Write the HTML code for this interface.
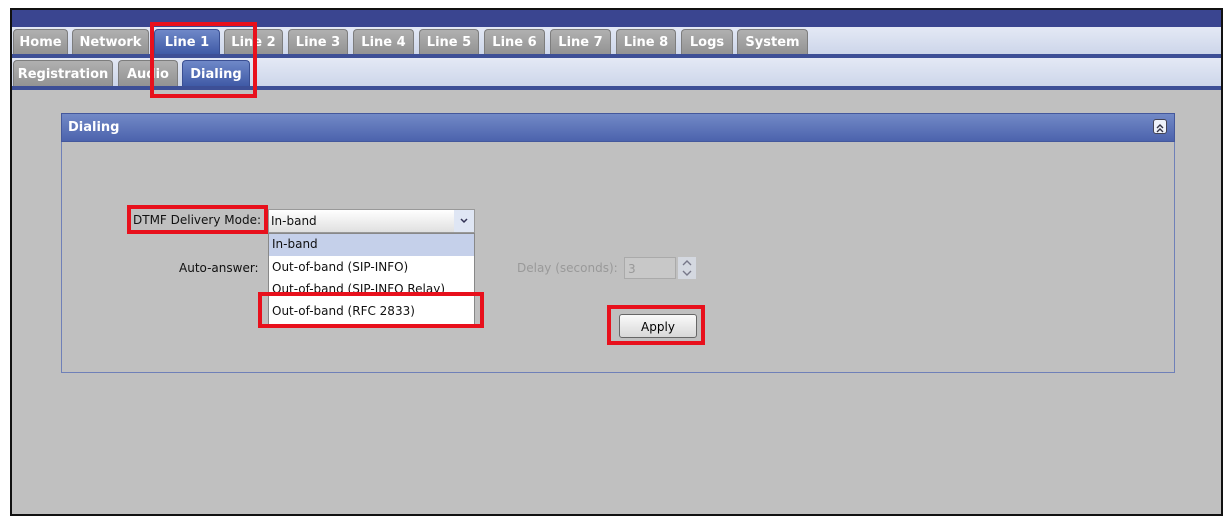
<!DOCTYPE html><html><head><style>
body{margin:0;width:1230px;height:523px;background:#fff;position:relative;font-family:"DejaVu Sans","Liberation Sans",sans-serif;overflow:hidden}
.a{position:absolute;box-sizing:border-box}
.frame{left:10px;top:8px;width:1213px;height:508px;border:2px solid #111;background:#c0c0c0;overflow:hidden}
.tab{position:absolute;top:29px;height:25px;background:linear-gradient(#b0b0b0,#939393);border:1px solid #7d7d7d;border-bottom:none;border-radius:4px 4px 0 0;color:#fff;font-size:13px;font-weight:bold;line-height:25px;text-align:center;box-sizing:border-box}
.on{background:linear-gradient(#6f88c8,#3f5aa6);border-color:#3a4f93}
.red{position:absolute;border:4px solid #e8101c;box-sizing:border-box}
.t{position:absolute;font-size:12px;color:#111;white-space:nowrap}
</style></head><body>
<div class="a frame"></div>
<div class="a" style="left:12px;top:10px;width:1209px;height:17px;background:#3a4590"></div>
<div class="a" style="left:12px;top:27px;width:1209px;height:27px;background:linear-gradient(#e4e9f5,#cdd6ea)"></div>
<div class="a" style="left:12px;top:54px;width:1209px;height:4px;background:#3d4f96"></div>
<div class="a" style="left:12px;top:58px;width:1209px;height:28px;background:linear-gradient(#e4e9f5,#cdd6ea)"></div>
<div class="a" style="left:12px;top:86px;width:1209px;height:4px;background:#3d4f96"></div>
<div class="tab" style="left:13px;width:55px">Home</div>
<div class="tab" style="left:72px;width:77px">Network</div>
<div class="tab on" style="left:154px;width:66px">Line 1</div>
<div class="tab" style="left:224px;width:59px">Line 2</div>
<div class="tab" style="left:288px;width:60px">Line 3</div>
<div class="tab" style="left:353px;width:61px">Line 4</div>
<div class="tab" style="left:419px;width:60px">Line 5</div>
<div class="tab" style="left:484px;width:61px">Line 6</div>
<div class="tab" style="left:550px;width:61px">Line 7</div>
<div class="tab" style="left:616px;width:60px">Line 8</div>
<div class="tab" style="left:681px;width:52px">Logs</div>
<div class="tab" style="left:737px;width:71px">System</div>
<div class="tab" style="left:13px;top:60px;width:100px;height:26px;line-height:28px">Registration</div>
<div class="tab" style="left:118px;top:60px;width:60px;height:26px;line-height:28px">Audio</div>
<div class="tab on" style="left:182px;top:60px;width:68px;height:26px;line-height:28px">Dialing</div>
<div class="a" style="left:61px;top:113px;width:1114px;height:260px;border:1px solid #6f80b8;background:#c0c0c0"></div>
<div class="a" style="left:61px;top:113px;width:1114px;height:29px;background:linear-gradient(#7289c6,#4c63ad);border:1px solid #44589c;color:#fff;font-size:13px;font-weight:bold;line-height:27px;padding-left:6px">Dialing</div>
<div class="a" style="left:1153px;top:119px;width:14px;height:15px;background:#eef2fb;border:1px solid #445;border-radius:3px"><svg width="12" height="13" viewBox="0 0 12 13"><path d="M3 6l3-3 3 3M3 10l3-3 3 3" fill="none" stroke="#334" stroke-width="1.4"/></svg></div>
<div class="t" style="left:133px;top:213px">DTMF Delivery Mode:</div>
<div class="a" style="left:268px;top:209px;width:207px;height:24px;background:linear-gradient(#fff,#e0e0e0);border:1px solid #999"></div>
<div class="t" style="left:271px;top:214px">In-band</div>
<div class="a" style="left:454px;top:210px;width:20px;height:22px;background:#dfe6f4"><svg width="20" height="22"><path d="M7 9l3 3 3-3" fill="none" stroke="#335" stroke-width="1.5"/></svg></div>
<div class="a" style="left:268px;top:233px;width:207px;height:92px;background:#fff;border:1px solid #888"></div>
<div class="a" style="left:269px;top:234px;width:205px;height:22px;background:#c5d0ea"></div>
<div class="t" style="left:272px;top:237px">In-band</div>
<div class="t" style="left:272px;top:260px">Out-of-band (SIP-INFO)</div>
<div class="t" style="left:272px;top:282px;height:13px;overflow:hidden">Out-of-band (SIP-INFO Relay)</div>
<div class="t" style="left:272px;top:304px">Out-of-band (RFC 2833)</div>
<div class="t" style="left:179px;top:261px">Auto-answer:</div>
<div class="t" style="left:517px;top:261px;color:#999">Delay (seconds):</div>
<div class="a" style="left:624px;top:257px;width:52px;height:22px;background:#c8c8c8;border:1px solid #aaa;color:#999;font-size:12px;padding:4px 3px">3</div>
<div class="a" style="left:678px;top:257px;width:18px;height:22px;background:#d4d8e0"><svg width="18" height="22"><path d="M5 8l4-4 4 4M5 14l4 4 4-4" fill="none" stroke="#778" stroke-width="1.4"/></svg></div>
<div class="a" style="left:619px;top:314px;width:78px;height:24px;background:linear-gradient(#fafafa,#d8d8d8);border:1px solid #666;border-radius:3px;font-size:12px;text-align:center;line-height:24px">Apply</div>
<div class="red" style="left:150px;top:22px;width:107px;height:76px"></div>
<div class="red" style="left:127px;top:205px;width:141px;height:29px"></div>
<div class="red" style="left:258px;top:292px;width:226px;height:36px"></div>
<div class="red" style="left:607px;top:305px;width:98px;height:40px"></div>
</body></html>
